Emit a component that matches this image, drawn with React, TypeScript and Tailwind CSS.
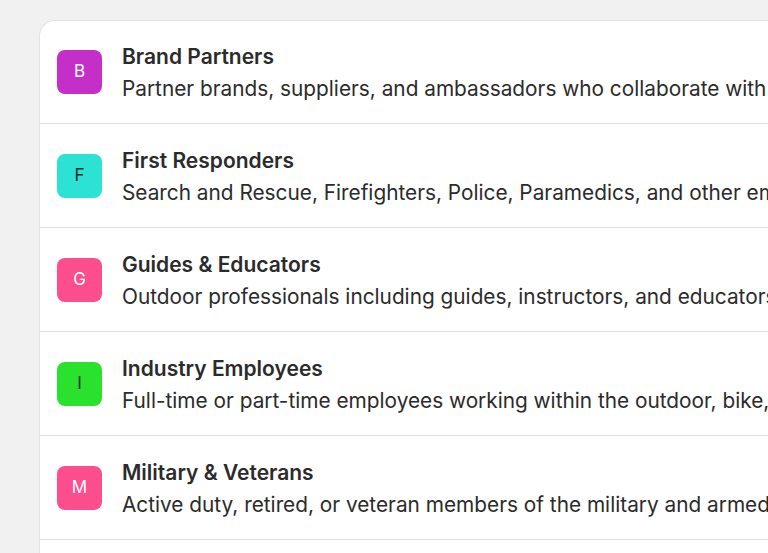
import React from "react";

const items = [
  { letter: "B", title: "Brand Partners", desc: "Partner brands, suppliers, and ambassadors who collaborate with our community", bg: "bg-[#c42fc8]", fg: "text-white" },
  { letter: "F", title: "First Responders", desc: "Search and Rescue, Firefighters, Police, Paramedics, and other emergency personnel", bg: "bg-[#2ce2d5]", fg: "text-[#1f2b2a]" },
  { letter: "G", title: "Guides & Educators", desc: "Outdoor professionals including guides, instructors, and educators", bg: "bg-[#fc4d8d]", fg: "text-white" },
  { letter: "I", title: "Industry Employees", desc: "Full-time or part-time employees working within the outdoor, bike, and snow industries", bg: "bg-[#2ae22e]", fg: "text-[#1f2b1f]" },
  { letter: "M", title: "Military & Veterans", desc: "Active duty, retired, or veteran members of the military and armed forces", bg: "bg-[#fc4d8d]", fg: "text-white" },
  { letter: "N", title: "Nonprofit Partners", desc: "Nonprofit organizations and their staff", bg: "bg-[#7c4dfc]", fg: "text-white" },
];

export default function App() {
  return (
    <div className="w-[768px] h-[553px] overflow-hidden bg-[#f1f1f1]" style={{ fontFamily: "Inter, 'Noto Sans', sans-serif" }}>
      <div className="ml-[39px] mt-[20px] w-[1100px] bg-white rounded-tl-2xl border-l border-t border-[#e3e3e3]">
        {items.map((it, i) => (
          <div key={it.letter} className={`${i === 0 ? "h-[103px]" : "h-[104px]"} border-b border-[#e2e2e2] flex items-center pl-[17px] gap-[20px]`}>
            <div className={`w-[45px] h-[44px] rounded-lg flex items-center justify-center shrink-0 text-[17px] ${it.bg} ${it.fg}`}>
              {it.letter}
            </div>
            <div className="mt-[2px] flex flex-col gap-[6px] whitespace-nowrap text-[#2b2b2b]">
              <div className="text-[21px] leading-[26px] font-semibold">{it.title}</div>
              <div className="text-[20.8px] leading-[26px]">{it.desc}</div>
            </div>
          </div>
        ))}
      </div>
    </div>
  );
}
